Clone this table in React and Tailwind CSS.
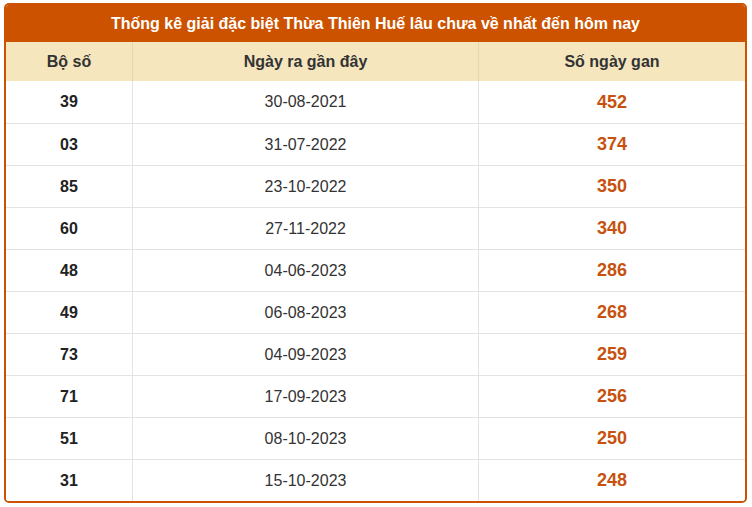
const rows = [
  ['39', '30-08-2021', '452'],
  ['03', '31-07-2022', '374'],
  ['85', '23-10-2022', '350'],
  ['60', '27-11-2022', '340'],
  ['48', '04-06-2023', '286'],
  ['49', '06-08-2023', '268'],
  ['73', '04-09-2023', '259'],
  ['71', '17-09-2023', '256'],
  ['51', '08-10-2023', '250'],
  ['31', '15-10-2023', '248'],
];

export default function App() {
  return (
    <div className="min-h-screen bg-white pt-[3px] pl-[4px]" style={{ fontFamily: '"Liberation Sans", Arial, sans-serif' }}>
      <div className="w-[743px] border-2 border-[#cc5200] rounded-[5px] overflow-hidden">
        {/* Title */}
        <div className="h-[37px] bg-[#cc5200] flex items-center justify-center text-white font-bold text-[16px]">
          Thống kê giải đặc biệt Thừa Thiên Huế lâu chưa về nhất đến hôm nay
        </div>

        {/* Header */}
        <div className="grid grid-cols-[126px_346px_1fr] h-[39px] bg-[#f5e6be] text-[#333] font-bold text-[16px]">
          <div className="flex items-center justify-center">Bộ số</div>
          <div className="flex items-center justify-center border-l border-[#e2d6b4]">Ngày ra gần đây</div>
          <div className="flex items-center justify-center border-l border-[#e2d6b4]">Số ngày gan</div>
        </div>

        {/* Rows */}
        {rows.map((r, i) => (
          <div
            key={r[0]}
            className={`grid grid-cols-[126px_346px_1fr] h-[42px] bg-white ${i === 0 ? '' : 'border-t border-[#e3e3e3]'}`}
          >
            <div className="flex items-center justify-center font-bold text-[16px] text-[#222]">{r[0]}</div>
            <div className="flex items-center justify-center border-l border-[#e3e3e3] text-[16px] text-[#333]">{r[1]}</div>
            <div className="flex items-center justify-center border-l border-[#e3e3e3] font-bold text-[18px] text-[#c7520f]">{r[2]}</div>
          </div>
        ))}
      </div>
    </div>
  );
}
